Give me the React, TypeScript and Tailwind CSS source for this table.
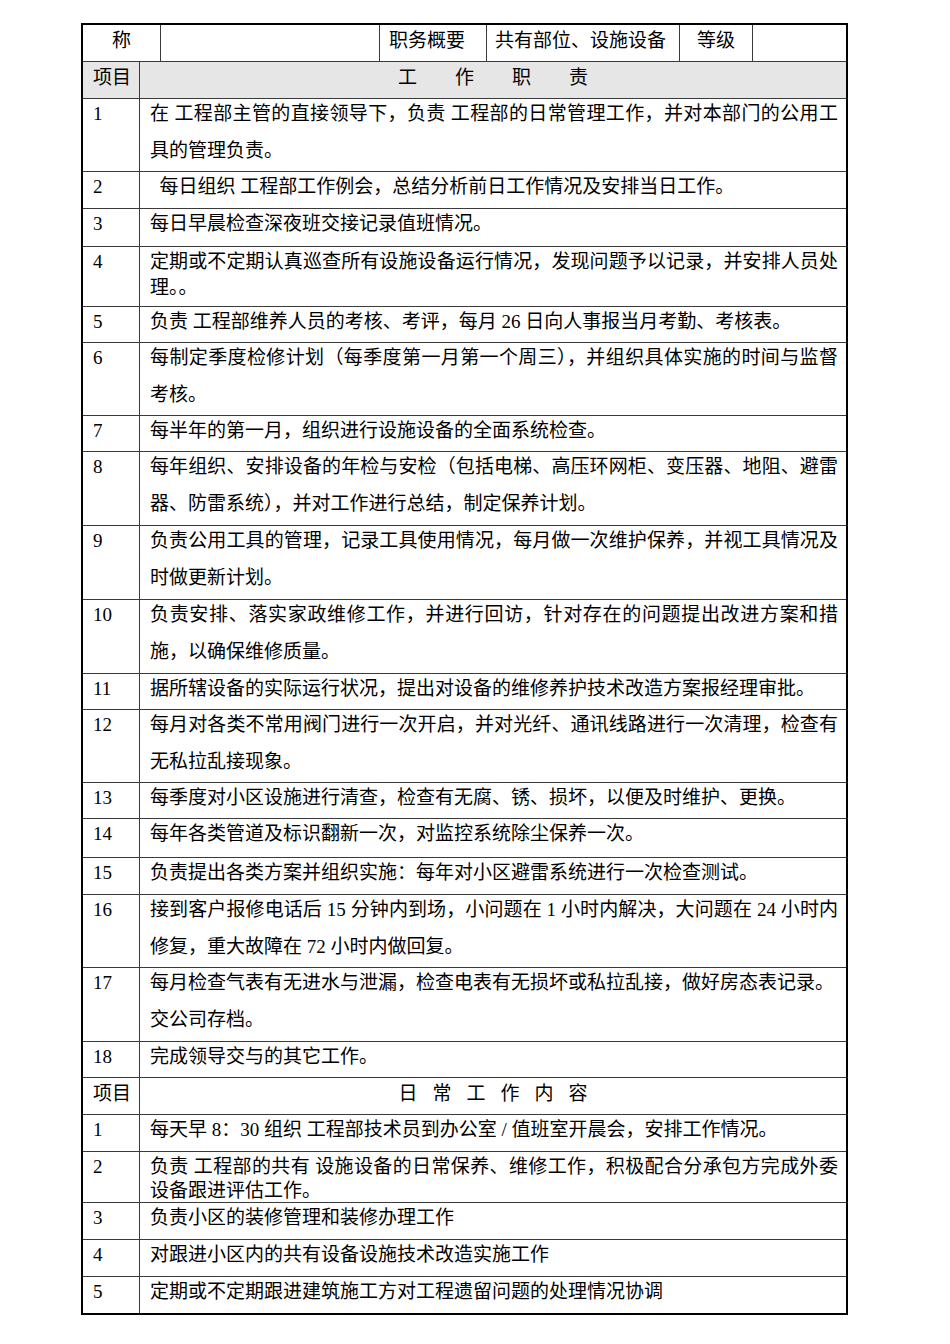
import React from "react";

type RowData = {
  label: string;
  lines: string[];
  h: string;
  gap?: string;
  justify?: boolean;
  last?: boolean;
};

const duties: RowData[] = [
  { label: "1", h: "h-[73px]", justify: true, lines: ["在 工程部主管的直接领导下，负责 工程部的日常管理工作，并对本部门的公用工", "具的管理负责。"] },
  { label: "2", h: "h-[37px]", lines: ["\u00a0\u00a0每日组织 工程部工作例会，总结分析前日工作情况及安排当日工作。"] },
  { label: "3", h: "h-[38px]", lines: ["每日早晨检查深夜班交接记录值班情况。"] },
  { label: "4", h: "h-[60px]", gap: "gap-[6px]", justify: true, lines: ["定期或不定期认真巡查所有设施设备运行情况，发现问题予以记录，并安排人员处", "理。。"] },
  { label: "5", h: "h-[36px]", lines: ["负责 工程部维养人员的考核、考评，每月 26 日向人事报当月考勤、考核表。"] },
  { label: "6", h: "h-[73px]", justify: true, lines: ["每制定季度检修计划（每季度第一月第一个周三），并组织具体实施的时间与监督", "考核。"] },
  { label: "7", h: "h-[36px]", lines: ["每半年的第一月，组织进行设施设备的全面系统检查。"] },
  { label: "8", h: "h-[74px]", justify: true, lines: ["每年组织、安排设备的年检与安检（包括电梯、高压环网柜、变压器、地阻、避雷", "器、防雷系统），并对工作进行总结，制定保养计划。"] },
  { label: "9", h: "h-[74px]", justify: true, lines: ["负责公用工具的管理，记录工具使用情况，每月做一次维护保养，并视工具情况及", "时做更新计划。"] },
  { label: "10", h: "h-[74px]", justify: true, lines: ["负责安排、落实家政维修工作，并进行回访，针对存在的问题提出改进方案和措", "施，以确保维修质量。"] },
  { label: "11", h: "h-[36px]", lines: ["据所辖设备的实际运行状况，提出对设备的维修养护技术改造方案报经理审批。"] },
  { label: "12", h: "h-[73px]", justify: true, lines: ["每月对各类不常用阀门进行一次开启，并对光纤、通讯线路进行一次清理，检查有", "无私拉乱接现象。"] },
  { label: "13", h: "h-[36px]", lines: ["每季度对小区设施进行清查，检查有无腐、锈、损坏，以便及时维护、更换。"] },
  { label: "14", h: "h-[39px]", lines: ["每年各类管道及标识翻新一次，对监控系统除尘保养一次。"] },
  { label: "15", h: "h-[37px]", lines: ["负责提出各类方案并组织实施：每年对小区避雷系统进行一次检查测试。"] },
  { label: "16", h: "h-[73px]", justify: true, lines: ["接到客户报修电话后 15 分钟内到场，小问题在 1 小时内解决，大问题在 24 小时内", "修复，重大故障在 72 小时内做回复。"] },
  { label: "17", h: "h-[74px]", lines: ["每月检查气表有无进水与泄漏，检查电表有无损坏或私拉乱接，做好房态表记录。", "交公司存档。"] },
  { label: "18", h: "h-[36px]", lines: ["完成领导交与的其它工作。"] },
];

const daily: RowData[] = [
  { label: "1", h: "h-[37px]", lines: ["每天早 8：30 组织 工程部技术员到办公室 / 值班室开晨会，安排工作情况。"] },
  { label: "2", h: "h-[51px]", gap: "gap-[4px]", justify: true, lines: ["负责 工程部的共有 设施设备的日常保养、维修工作，积极配合分承包方完成外委", "设备跟进评估工作。"] },
  { label: "3", h: "h-[37px]", lines: ["负责小区的装修管理和装修办理工作"] },
  { label: "4", h: "h-[37px]", lines: ["对跟进小区内的共有设备设施技术改造实施工作"] },
  { label: "5", h: "h-[36px]", last: true, lines: ["定期或不定期跟进建筑施工方对工程遗留问题的处理情况协调"] },
];

function Row({ label, lines, h, gap, justify, last }: RowData) {
  return (
    <div className={`flex ${h} ${last ? "" : "border-b border-[#3a3a3a]"}`}>
      <div className="w-[57px] shrink-0 border-r border-[#3a3a3a] pl-[10px] pt-[5px] leading-[20px]">{label}</div>
      <div className={`flex-1 flex flex-col pl-[10px] pr-[8px] pt-[5px] leading-[20px] ${gap ?? "gap-[17px]"}`}>
        {lines.map((l, i) => (
          <div
            key={i}
            className={justify && i === 0 && lines.length > 1 ? "text-justify [text-align-last:justify]" : ""}
          >
            {l}
          </div>
        ))}
      </div>
    </div>
  );
}

function SpacedHeader({ label, chars, gap, gray }: { label: string; chars: string[]; gap: string; gray?: boolean }) {
  return (
    <div className={`flex h-[37px] border-b border-[#3a3a3a] ${gray ? "bg-[#e6e6e6]" : ""}`}>
      <div className="w-[57px] shrink-0 border-r border-[#3a3a3a] pl-[10px] pt-[6px] leading-[20px]">{label}</div>
      <div className={`flex-1 flex justify-center pt-[6px] leading-[20px] ${gap}`}>
        {chars.map((c, i) => (
          <span key={i}>{c}</span>
        ))}
      </div>
    </div>
  );
}

export default function App() {
  return (
    <div className="w-[950px] min-h-[1344px] bg-white text-black font-['Liberation_Serif','Noto_Sans_CJK_SC',serif] text-[19px] pt-[23px]">
      <div className="ml-[81px] w-[767px] border-2 border-black">
        <div className="flex h-[37px] border-b border-[#3a3a3a] leading-[20px]">
          <div className="w-[78px] shrink-0 border-r border-[#3a3a3a] pt-[6px] text-center">称</div>
          <div className="w-[219px] shrink-0 border-r border-[#3a3a3a]"></div>
          <div className="w-[107px] shrink-0 border-r border-[#3a3a3a] pl-[9px] pt-[6px]">职务概要</div>
          <div className="w-[193px] shrink-0 border-r border-[#3a3a3a] pl-[8px] pt-[6px]">共有部位、设施设备</div>
          <div className="w-[73px] shrink-0 border-r border-[#3a3a3a] pt-[6px] text-center">等级</div>
          <div className="flex-1"></div>
        </div>
        <SpacedHeader label="项目" chars={["工", "作", "职", "责"]} gap="gap-[38px]" gray />
        {duties.map((r) => (
          <Row key={"d" + r.label} {...r} />
        ))}
        <SpacedHeader label="项目" chars={["日", "常", "工", "作", "内", "容"]} gap="gap-[15px]" />
        {daily.map((r) => (
          <Row key={"s" + r.label} {...r} />
        ))}
      </div>
    </div>
  );
}
